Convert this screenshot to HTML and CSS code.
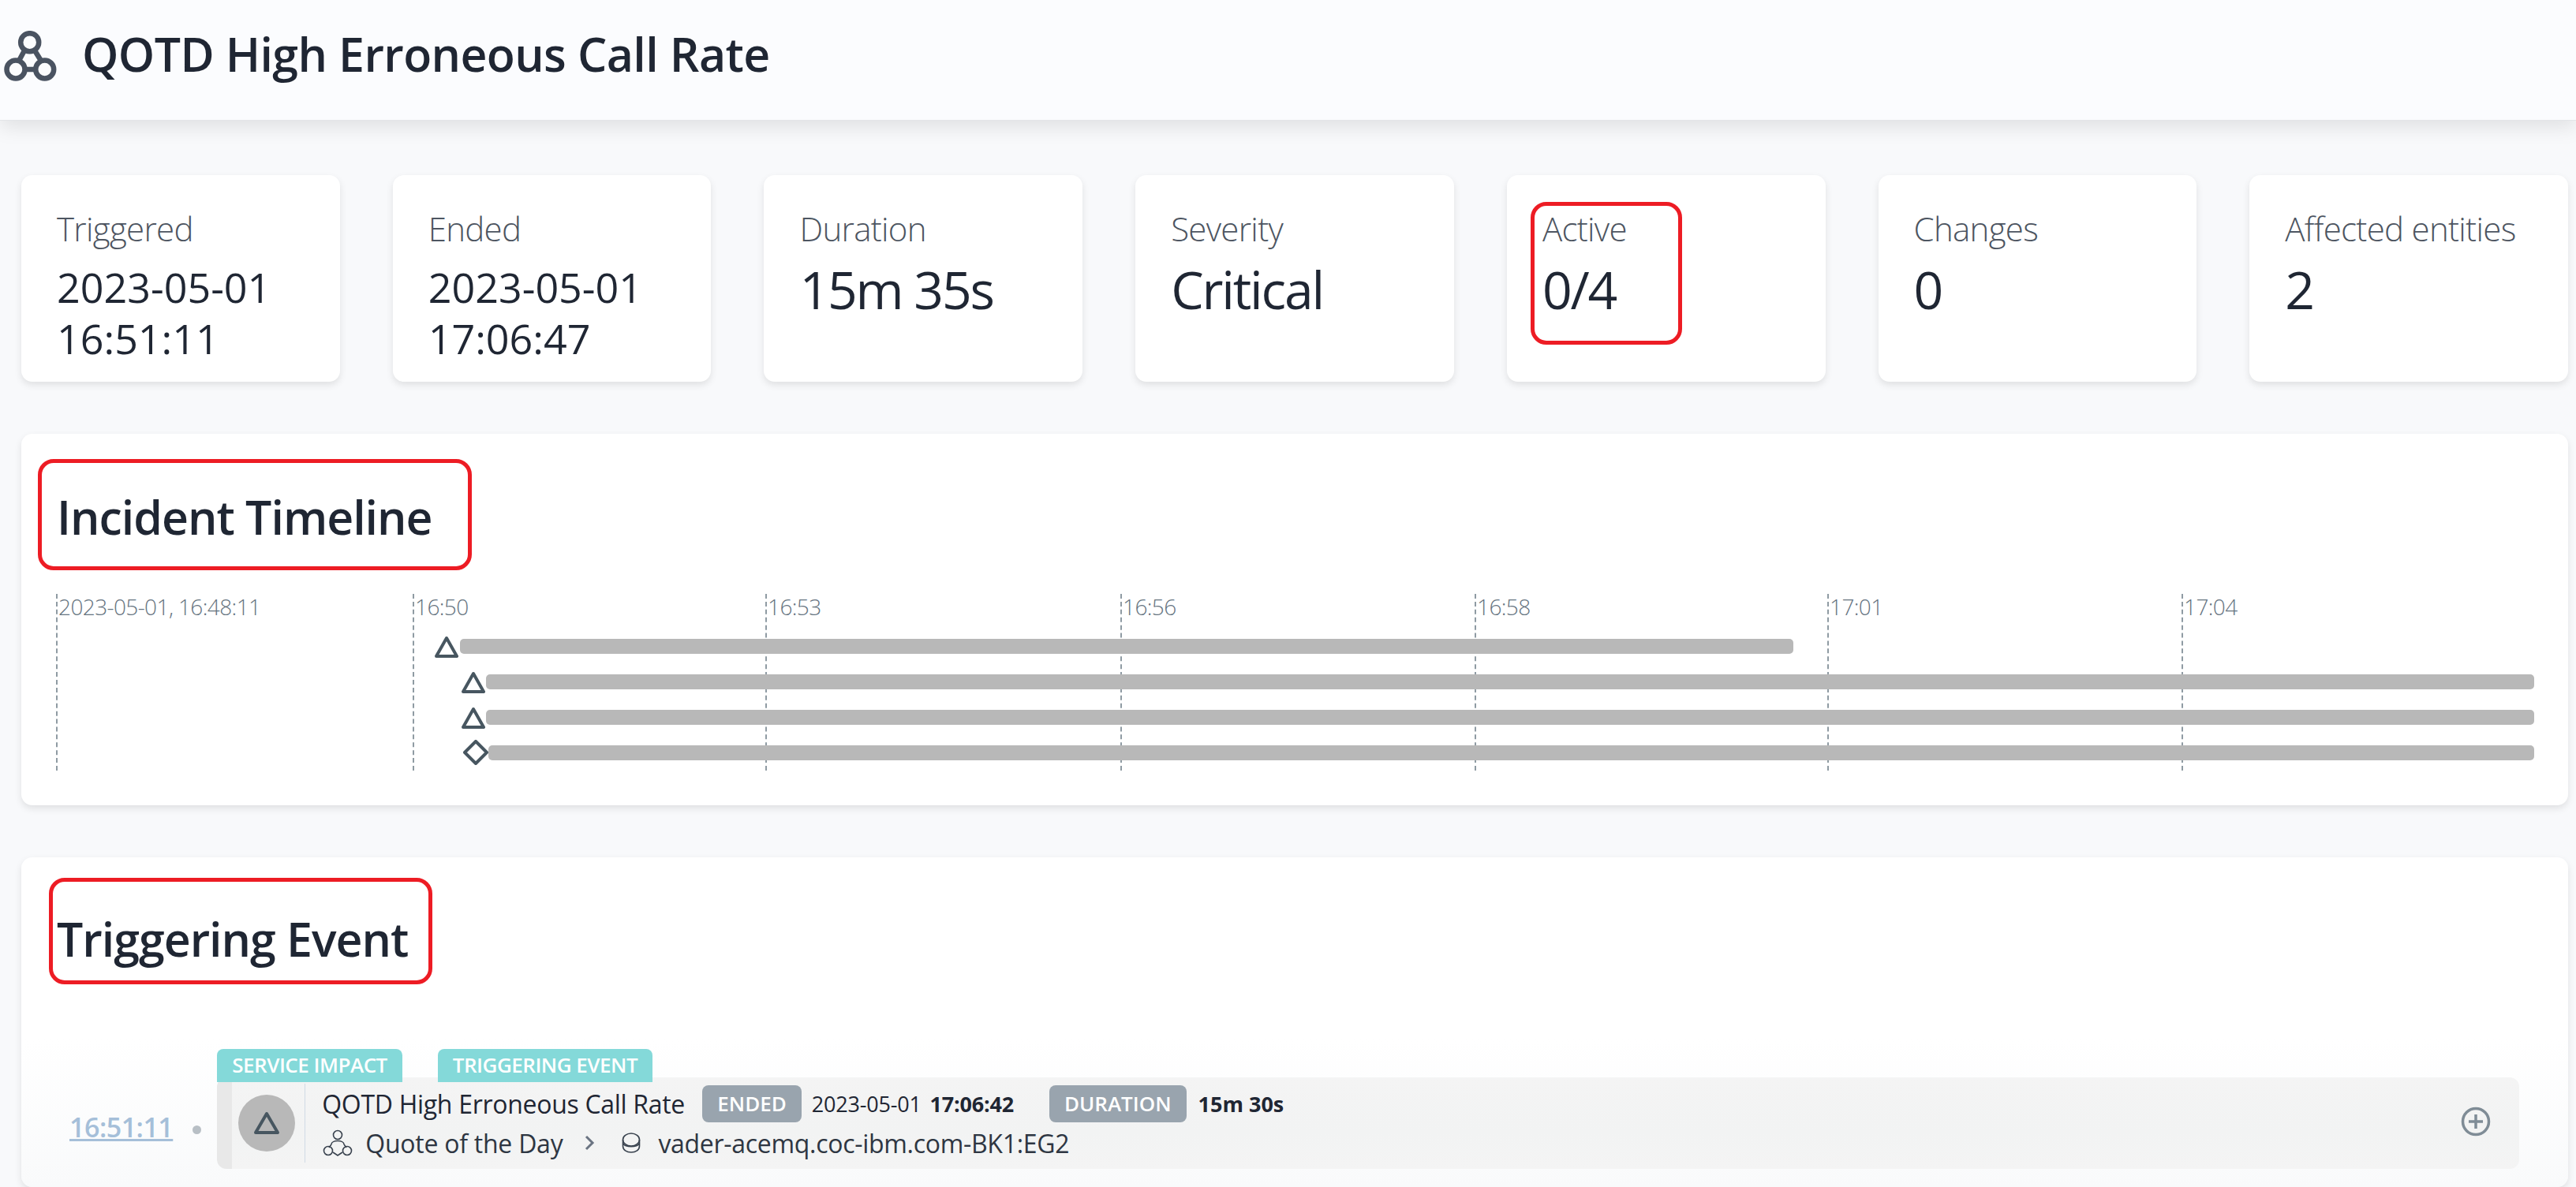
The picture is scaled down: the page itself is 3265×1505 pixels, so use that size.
FILE: index.html
```html
<!DOCTYPE html>
<html lang="en">
<head>
  <meta charset="UTF-8" />
  <title>QOTD High Erroneous Call Rate</title>
  <link rel="stylesheet" href="styles.css">
</head>
<body>

  <header class="topbar">
    <svg class="logo" viewBox="5 33 68 64" width="68" height="64">
      <g fill="none" stroke="#4a5361" stroke-width="6.5">
        <circle cx="37.7" cy="47.7" r="11.5"/>
        <circle cx="20" cy="82" r="11.5"/>
        <circle cx="56.7" cy="82" r="11.5"/>
        <path d="M31 58 L24 71 M44 58 L52 71 M31 82 H46"/>
      </g>
    </svg>
    <h1>QOTD High Erroneous Call Rate</h1>
  </header>

  <main class="content">
    <section class="stats">
      <div class="stat">
        <div class="stat-label">Triggered</div>
        <div class="stat-date">2023-05-01<br>16:51:11</div>
      </div>
      <div class="stat">
        <div class="stat-label">Ended</div>
        <div class="stat-date">2023-05-01<br>17:06:47</div>
      </div>
      <div class="stat">
        <div class="stat-label">Duration</div>
        <div class="stat-value">15m 35s</div>
      </div>
      <div class="stat">
        <div class="stat-label">Severity</div>
        <div class="stat-value">Critical</div>
      </div>
      <div class="stat">
        <div class="stat-label">Active</div>
        <div class="stat-value">0/4</div>
        <div class="mark mark-active"></div>
      </div>
      <div class="stat">
        <div class="stat-label">Changes</div>
        <div class="stat-value">0</div>
      </div>
      <div class="stat">
        <div class="stat-label">Affected entities</div>
        <div class="stat-value">2</div>
      </div>
    </section>

    <section class="panel timeline-panel">
      <h2>Incident Timeline</h2>
      <div class="mark mark-timeline"></div>

      <div class="chart">
        <div class="tick" style="left: 44px"><span>2023-05-01, 16:48:11</span></div>
        <div class="tick" style="left: 496px"><span>16:50</span></div>
        <div class="tick" style="left: 943px"><span>16:53</span></div>
        <div class="tick" style="left: 1393px"><span>16:56</span></div>
        <div class="tick" style="left: 1842px"><span>16:58</span></div>
        <div class="tick" style="left: 2289px"><span>17:01</span></div>
        <div class="tick" style="left: 2738px"><span>17:04</span></div>

        <svg class="marker" style="left: 524px; top: 53px" width="30" height="28" viewBox="0 0 30 28"><path d="M15 3 L28 26 H2 Z"/></svg>
        <div class="bar" style="left: 556px; top: 57px; width: 1690px"></div>

        <svg class="marker" style="left: 558px; top: 98px" width="30" height="28" viewBox="0 0 30 28"><path d="M15 3 L28 26 H2 Z"/></svg>
        <div class="bar" style="left: 589px; top: 102px; width: 2596px"></div>

        <svg class="marker" style="left: 558px; top: 143px" width="30" height="28" viewBox="0 0 30 28"><path d="M15 3 L28 26 H2 Z"/></svg>
        <div class="bar" style="left: 589px; top: 147px; width: 2596px"></div>

        <svg class="marker" style="left: 560px; top: 185px" width="32" height="32" viewBox="0 0 32 32"><path d="M16 2 L30 16 L16 30 L2 16 Z"/></svg>
        <div class="bar" style="left: 592px; top: 192px; width: 2593px"></div>
      </div>
    </section>

    <section class="panel trigger-panel">
      <h2>Triggering Event</h2>
      <div class="mark mark-trigger"></div>

      <div class="event">
        <a class="event-time" href="#">16:51:11</a>
        <span class="event-dot"></span>
        <div class="event-body">
          <div class="tabs">
            <span class="tab">SERVICE IMPACT</span>
            <span class="tab">TRIGGERING EVENT</span>
          </div>
          <div class="event-row">
            <div class="event-icon">
              <svg width="36" height="32" viewBox="0 0 36 32"><path d="M18 4 L32 28 H4 Z"/></svg>
            </div>
            <div class="event-info">
              <div class="info-line">
                <span class="event-name">QOTD High Erroneous Call Rate</span>
                <span class="badge">ENDED</span>
                <span class="info-date">2023-05-01 <b>17:06:42</b></span>
                <span class="badge badge-duration">DURATION</span>
                <b class="info-duration">15m 30s</b>
              </div>
              <div class="info-line path-line">
                <svg class="service-icon" width="40" height="34" viewBox="0 0 40 34">
                  <g fill="none" stroke="#39424e" stroke-width="1.6">
                    <circle cx="20" cy="7" r="5.5"/>
                    <path d="M12 19 C12 13 28 13 28 19 M12 19 L9 23 M28 19 L31 23"/>
                    <circle cx="8" cy="27" r="5.5"/>
                    <circle cx="32" cy="27" r="5.5"/>
                    <path d="M14 29 L20 33 L26 29"/>
                  </g>
                </svg>
                <span class="service-name">Quote of the Day</span>
                <svg class="chevron" width="14" height="20" viewBox="0 0 14 20"><path d="M3 2 L11 10 L3 18"/></svg>
                <svg class="db-icon" width="24" height="26" viewBox="0 0 24 26">
                  <g fill="none" stroke="#39424e" stroke-width="1.6">
                    <ellipse cx="12" cy="9" rx="10.5" ry="8"/>
                    <path d="M1.5 9 V17 C1.5 22 6 25 12 25 C18 25 22.5 22 22.5 17 V9"/>
                    <path d="M1.5 14 C5 19 19 19 22.5 14"/>
                  </g>
                </svg>
                <span class="entity-name">vader-acemq.coc-ibm.com-BK1:EG2</span>
              </div>
            </div>
            <svg class="expand" width="38" height="38" viewBox="0 0 38 38">
              <circle cx="19" cy="19" r="16.5"/>
              <path d="M19 10 V28 M10 19 H28"/>
            </svg>
          </div>
        </div>
      </div>
    </section>
  </main>

</body>
</html>
```

FILE: styles.css
```css
* {
  box-sizing: border-box;
}

html, body {
  height: 100%;
}

body {
  margin: 0;
  overflow: hidden;
  background: #f8f9fb;
  color: #1f2633;
  font-family: "Open Sans", "Noto Sans", sans-serif;
}

.topbar {
  display: flex;
  align-items: center;
  height: 153px;
  padding-left: 5px;
  background: #fbfcfe;
  border-bottom: 1px solid #e3e5e8;
  box-shadow: 0 8px 24px rgba(0, 0, 0, 0.1);
}

.logo {
  margin-top: -10px;
}

.topbar h1 {
  margin: -16px 0 0 31px;
  font-size: 59px;
  font-weight: 600;
  letter-spacing: -0.6px;
  line-height: 1;
}

.content {
  padding: 69px 10px 0 27px;
}

.stats {
  display: flex;
  gap: 67px;
}

.stat {
  position: relative;
  width: 404px;
  height: 262px;
  padding: 40px 20px 0 45px;
  background: white;
  border-radius: 14px;
  box-shadow: 0 4px 10px rgba(0, 0, 0, 0.1);
}

.stat-label {
  height: 62px;
  color: #4d5561;
  font-size: 42px;
  font-weight: 300;
  letter-spacing: -0.7px;
  line-height: 56px;
}

.stat-date {
  margin-top: 7px;
  font-size: 52px;
  font-weight: 400;
  line-height: 65px;
}

.stat-value {
  font-size: 66px;
  font-weight: 400;
  letter-spacing: -2.2px;
  line-height: 84px;
}

.panel {
  position: relative;
  margin-top: 66px;
  background: white;
  border-radius: 14px;
  box-shadow: 0 4px 10px rgba(0, 0, 0, 0.1);
}

.panel h2 {
  margin: 0;
  font-size: 59px;
  font-weight: 600;
  letter-spacing: -1px;
  line-height: 1;
}

.timeline-panel {
  height: 471px;
  padding: 76px 0 0 45px;
}

.chart {
  position: absolute;
  left: 0;
  right: 0;
  top: 203px;
  height: 224px;
}

.tick {
  position: absolute;
  top: 0;
  bottom: 0;
  border-left: 2px dashed #8f9ba3;
}

.tick span {
  display: block;
  margin: -2px 0 0 1px;
  color: #66747f;
  font-size: 28px;
  font-weight: 300;
  letter-spacing: -0.6px;
  line-height: 36px;
  white-space: nowrap;
}

.bar {
  position: absolute;
  height: 19px;
  background: #b8b8b8;
  border-radius: 5px;
}

.marker {
  position: absolute;
}

.marker path {
  fill: none;
  stroke: #475660;
  stroke-width: 4;
  stroke-linejoin: round;
}

.trigger-panel {
  height: 418px;
  padding: 74px 0 0 45px;
  background: linear-gradient(white 55%, #f9fafb 100%);
}

.event {
  display: flex;
  align-items: flex-end;
  margin: 110px 0 0 16px;
}

.event-time {
  margin-bottom: 30px;
  color: #a5bfd9;
  font-size: 34px;
  font-weight: 600;
  letter-spacing: -0.5px;
  text-decoration: underline;
}

.event-dot {
  width: 11px;
  height: 11px;
  margin: 0 20px 44px 25px;
  background: #b8bfc5;
  border-radius: 50%;
}

.event-body {
  position: relative;
  width: 2918px;
}

.tabs {
  position: relative;
  z-index: 1;
  display: flex;
  gap: 45px;
  margin-bottom: -6px;
}

.tab {
  height: 42px;
  padding: 0 19px;
  background: #84d9d9;
  border-radius: 8px 8px 0 0;
  color: white;
  font-size: 26px;
  font-weight: 600;
  letter-spacing: -0.5px;
  line-height: 40px;
}

.event-row {
  display: flex;
  align-items: center;
  height: 116px;
  padding-right: 36px;
  background: linear-gradient(#f4f4f4, #f2f3f3 60%, #f4f4f4);
  border-left: 19px solid #e8e8e8;
  border-radius: 12px;
}

.event-icon {
  display: flex;
  align-items: center;
  justify-content: center;
  width: 72px;
  height: 72px;
  margin-left: 8px;
  background: #b8b8b8;
  border-radius: 50%;
}

.event-icon path {
  fill: none;
  stroke: #475660;
  stroke-width: 4;
  stroke-linejoin: round;
}

.event-info {
  margin-left: 12px;
  padding-left: 21px;
  height: 100px;
  border-left: 1px solid #d0dae5;
}

.info-line {
  display: flex;
  align-items: center;
  height: 50px;
  font-size: 32px;
  white-space: nowrap;
}

.event-name {
  width: 482px;
  letter-spacing: -0.3px;
}

.badge {
  height: 47px;
  padding: 0 19px;
  background: #99a4ae;
  border-radius: 8px;
  color: white;
  font-size: 26px;
  font-weight: 600;
  line-height: 47px;
}

.info-date {
  margin-left: 13px;
  font-size: 27px;
  letter-spacing: -0.2px;
}

.info-date b {
  margin-left: 4px;
}

.badge-duration {
  margin-left: 45px;
}

.info-duration {
  margin-left: 15px;
  font-size: 27px;
}

.path-line {
  color: #2e3642;
}

.service-name {
  margin-left: 15px;
  letter-spacing: -0.25px;
}

.chevron {
  margin-left: 27px;
}

.chevron path {
  fill: none;
  stroke: #6b7482;
  stroke-width: 3;
}

.db-icon {
  margin-left: 34px;
}

.entity-name {
  margin-left: 22px;
  letter-spacing: -0.3px;
}

.expand {
  margin: -4px 0 0 auto;
}

.expand circle,
.expand path {
  fill: none;
  stroke: #7f8c96;
  stroke-width: 3.5;
}

/* annotation boxes */
.mark {
  position: absolute;
  border: 5px solid #ed1c24;
  border-radius: 20px;
}

.mark-active {
  left: 30px;
  top: 34px;
  width: 192px;
  height: 181px;
}

.mark-timeline {
  left: 21px;
  top: 32px;
  width: 550px;
  height: 141px;
}

.mark-trigger {
  left: 35px;
  top: 26px;
  width: 486px;
  height: 135px;
}
```
